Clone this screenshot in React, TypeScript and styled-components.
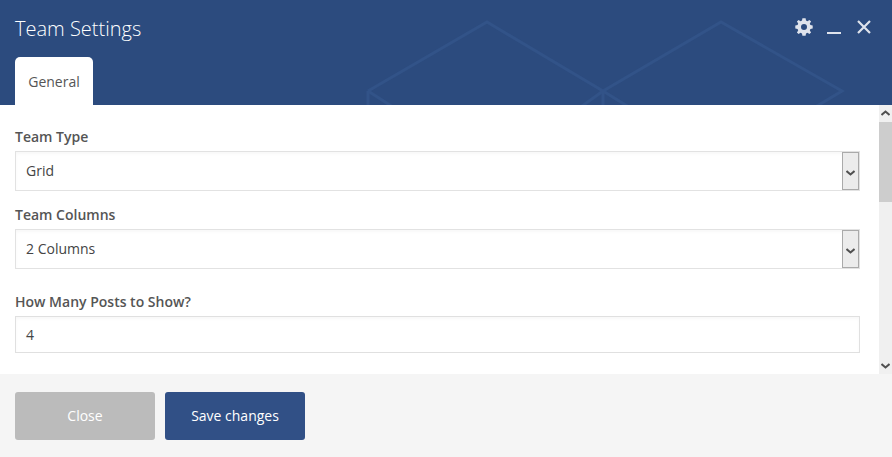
import React from 'react'
import styled, { createGlobalStyle } from 'styled-components'

const GlobalStyle = createGlobalStyle`
    html, body {
        margin: 0;
        padding: 0;
        background: #fff;
    }
    * {
        box-sizing: border-box;
    }
`

const Chevron: React.FC<{ up?: boolean }> = ({ up }) => (
    <svg width="9" height="7" viewBox="0 0 9 7">
        <path
            d={up ? 'M0.5 5 L4.5 1.5 L8.5 5' : 'M0.5 2 L4.5 5.5 L8.5 2'}
            fill="none"
            stroke="#505050"
            strokeWidth="2"
        />
    </svg>
)

const fields = [
    { label: 'Team Type', value: 'Grid' },
    { label: 'Team Columns', value: '2 Columns' },
]

const App: React.FC = () => {
    return (
        <Modal>
            <GlobalStyle />
            <Header>
                <Pattern viewBox="0 0 892 105" width="892" height="105">
                    <g fill="none" stroke="#325388" strokeWidth="3">
                        <path d="M368 91 L487 22 L603 91 L721 22 L842 91 L812 109" />
                        <path d="M368 91 L396 109" />
                        <path d="M368 91 V109" />
                        <path d="M603 91 L632 109" />
                        <path d="M603 91 L578 109" />
                        <path d="M603 91 V109" />
                    </g>
                </Pattern>
                <TitleRow>
                    <Title>Team Settings</Title>
                    <Actions>
                        <svg width="18" height="18" viewBox="0 0 18 18">
                            <path
                                fillRule="evenodd"
                                fill="#dfe3ec"
                                d="M7.4 0.3 H10.6 L11 2.6 L12.5 3.2 L14.4 1.9 L16.1 3.6 L14.8 5.5 L15.4 7 L17.7 7.4 V10.6 L15.4 11 L14.8 12.5 L16.1 14.4 L14.4 16.1 L12.5 14.8 L11 15.4 L10.6 17.7 H7.4 L7 15.4 L5.5 14.8 L3.6 16.1 L1.9 14.4 L3.2 12.5 L2.6 11 L0.3 10.6 V7.4 L2.6 7 L3.2 5.5 L1.9 3.6 L3.6 1.9 L5.5 3.2 L7 2.6 Z M9 6 A3 3 0 1 0 9 12 A3 3 0 1 0 9 6 Z"
                            />
                        </svg>
                        <MinimizeIcon />
                        <svg width="14" height="14" viewBox="0 0 14 14">
                            <path d="M1 1 L13 13 M13 1 L1 13" stroke="#dfe3ec" strokeWidth="2.2" fill="none" />
                        </svg>
                    </Actions>
                </TitleRow>
                <Tab>General</Tab>
            </Header>

            <Body>
                <Content>
                    {fields.map(field => (
                        <Field key={field.label}>
                            <Label>{field.label}</Label>
                            <SelectBox>
                                {field.value}
                                <SelectArrow>
                                    <Chevron />
                                </SelectArrow>
                            </SelectBox>
                        </Field>
                    ))}
                    <InputField>
                        <Label>How Many Posts to Show?</Label>
                        <InputBox>4</InputBox>
                    </InputField>
                </Content>
                <Scrollbar>
                    <ScrollButton>
                        <Chevron up />
                    </ScrollButton>
                    <ScrollTrack>
                        <ScrollThumb />
                    </ScrollTrack>
                    <ScrollButton>
                        <Chevron />
                    </ScrollButton>
                </Scrollbar>
            </Body>

            <Footer>
                <FooterButton>Close</FooterButton>
                <FooterButton primary>Save changes</FooterButton>
            </Footer>
        </Modal>
    )
}

export default App

const Modal = styled.div`
    width: 892px;
    height: 457px;
    overflow: hidden;
    display: flex;
    flex-direction: column;
    font-family: 'Open Sans', sans-serif;
    font-size: 14px;
    color: #444;
`

const Header = styled.div`
    position: relative;
    height: 105px;
    flex-shrink: 0;
    background: #2c4b7e;
    padding: 0 15px;
    display: flex;
    flex-direction: column;
    justify-content: space-between;
`

const Pattern = styled.svg`
    position: absolute;
    top: 0;
    left: 0;
`

const TitleRow = styled.div`
    position: relative;
    display: flex;
    justify-content: space-between;
    align-items: center;
    height: 57px;
    padding-right: 6px;
`

const Title = styled.div`
    font-size: 20px;
    font-weight: 300;
    color: #fff;
`

const Actions = styled.div`
    display: flex;
    align-items: center;
    gap: 14px;
    margin-top: -4px;
`

const MinimizeIcon = styled.span`
    display: block;
    width: 14px;
    height: 2px;
    background: #dfe3ec;
    margin-top: 12px;
    margin-right: 2px;
`

const Tab = styled.div`
    position: relative;
    width: 78px;
    height: 48px;
    background: #fff;
    border-radius: 5px 5px 0 0;
    color: #555;
    display: flex;
    align-items: center;
    justify-content: center;
`

const Body = styled.div`
    height: 269px;
    flex-shrink: 0;
    display: flex;
`

const Content = styled.div`
    flex: 1;
    padding: 22px 19px 0 15px;
`

const Field = styled.div`
    margin-bottom: 14px;
`

const InputField = styled.div`
    margin-top: 23px;
`

const Label = styled.div`
    font-weight: 600;
    color: #555;
    font-size: 14px;
    line-height: 20px;
    margin-bottom: 4px;
`

const SelectBox = styled.div`
    position: relative;
    height: 40px;
    border: 1px solid #e2e2e2;
    box-shadow: inset 0 2px 3px rgba(0, 0, 0, 0.03);
    display: flex;
    align-items: center;
    padding: 0 0 2px 10px;
    color: #444;
    background: #fff;
`

const SelectArrow = styled.div`
    position: absolute;
    top: 0;
    right: 0;
    bottom: 0;
    width: 17px;
    padding-top: 2px;
    background: #ececec;
    border: 1px solid #aaa;
    display: flex;
    align-items: center;
    justify-content: center;
`

const InputBox = styled.div`
    height: 37px;
    border: 1px solid #e0e0e0;
    box-shadow: inset 0 2px 3px rgba(0, 0, 0, 0.03);
    display: flex;
    align-items: center;
    padding-left: 10px;
    color: #444;
`

const Scrollbar = styled.div`
    width: 13px;
    background: #f0f0f0;
    display: flex;
    flex-direction: column;
`

const ScrollButton = styled.div`
    height: 17px;
    flex-shrink: 0;
    display: flex;
    align-items: center;
    justify-content: center;
`

const ScrollTrack = styled.div`
    flex: 1;
`

const ScrollThumb = styled.div`
    height: 80px;
    background: #cdcdcd;
`

const Footer = styled.div`
    flex: 1;
    background: #f5f5f5;
    padding: 18px 15px 0;
    display: flex;
    gap: 10px;
    align-items: flex-start;
`

const FooterButton = styled.div<{ primary?: boolean }>`
    width: 140px;
    height: 48px;
    padding-bottom: 2px;
    border-radius: 3px;
    background: ${props => (props.primary ? '#315086' : '#bbbbbb')};
    color: #fff;
    display: flex;
    align-items: center;
    justify-content: center;
`
